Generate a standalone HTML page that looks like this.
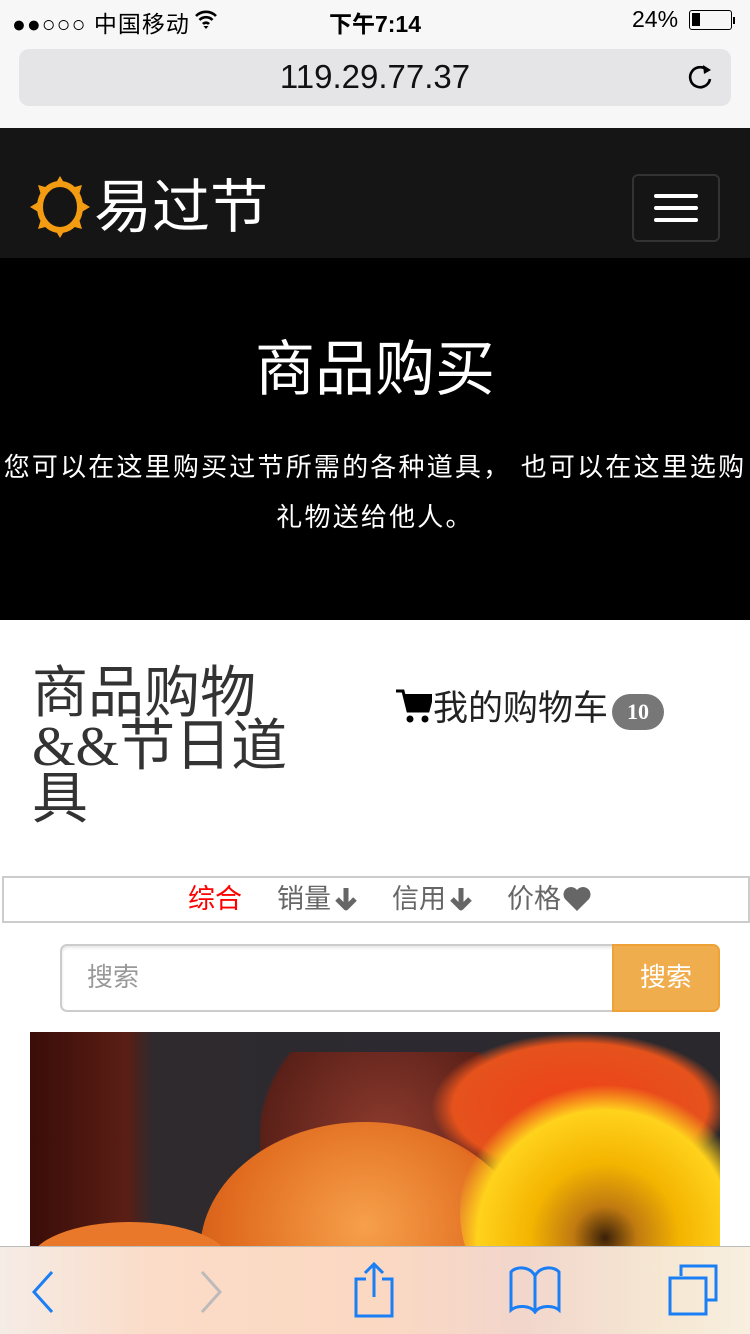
<!DOCTYPE html>
<html><head><meta charset="utf-8"><style>
*{margin:0;padding:0;box-sizing:border-box}
body{width:750px;height:1334px;overflow:hidden;position:relative;background:#fff;font-family:"Liberation Sans","Noto Sans CJK SC",sans-serif}
.abs{position:absolute}
</style></head><body>
<div class="abs" style="left:0;top:0;width:750px;height:128px;background:#f7f7f7"></div>
<div class="abs" style="left:12px;top:5px;font-size:23px;color:#000;letter-spacing:1px">●●○○○ 中国移动</div>
<svg class="abs" style="left:194px;top:9px" width="24" height="22" viewBox="0 0 24 22"><path d="M2 7a14 14 0 0 1 20 0M5.5 11a9 9 0 0 1 13 0M9 15a4 4 0 0 1 6 0" stroke="#000" stroke-width="2.6" fill="none"/><path d="M12 20l-2.5-3h5z" fill="#000"/></svg>
<div class="abs" style="left:0;width:750px;text-align:center;top:5px;font-size:23px;font-weight:bold">下午7:14</div>
<div class="abs" style="left:632px;top:6px;font-size:23px">24%</div>
<div class="abs" style="left:689px;top:10px;width:43px;height:20px;border:1.5px solid #000;border-radius:3px"><div style="margin:2px;width:8px;height:13px;background:#000"></div></div>
<div class="abs" style="left:733px;top:17px;width:2px;height:7px;background:#000"></div>
<div class="abs" style="left:19px;top:49px;width:712px;height:57px;background:#e5e5e8;border-radius:10px"></div>
<div class="abs" style="left:0;width:750px;text-align:center;top:58px;font-size:33px;color:#111">119.29.77.37</div>
<svg class="abs" style="left:686px;top:61px" width="30" height="32" viewBox="0 0 30 32"><path d="M22 10A10 10 0 1 0 24 18" stroke="#000" stroke-width="2.6" fill="none"/><path d="M17 4l8 5-7 4z" fill="#000"/></svg>

<div class="abs" style="left:0;top:128px;width:750px;height:130px;background:#151515"></div>
<svg class="abs" style="left:30px;top:176px" width="60" height="62" viewBox="0 0 60 62"><g fill="#f39c12"><polygon points="30,0 36,10 24,10"/><polygon points="30,62 36,52 24,52"/><polygon points="0,31 10,25 10,37"/><polygon points="60,31 50,25 50,37"/><polygon points="8,9 19,12 11,19"/><polygon points="52,9 41,12 49,19"/><polygon points="8,53 19,50 11,43"/><polygon points="52,53 41,50 49,43"/></g><ellipse cx="30" cy="31" rx="20" ry="23" fill="none" stroke="#f39c12" stroke-width="6"/></svg>
<div class="abs" style="left:94px;top:174px;font-size:58px;color:#fff;line-height:68px">易过节</div>
<div class="abs" style="left:632px;top:174px;width:88px;height:68px;border:2px solid #333;border-radius:6px"></div>
<div class="abs" style="left:654px;top:194px;width:44px;height:4px;background:#fff;border-radius:2px"></div>
<div class="abs" style="left:654px;top:206px;width:44px;height:4px;background:#fff;border-radius:2px"></div>
<div class="abs" style="left:654px;top:218px;width:44px;height:4px;background:#fff;border-radius:2px"></div>

<div class="abs" style="left:0;top:258px;width:750px;height:362px;background:#000"></div>
<div class="abs" style="left:0;width:750px;text-align:center;top:334px;font-size:60px;color:#fff;line-height:72px">商品购买</div>
<div class="abs" style="left:0;width:750px;text-align:center;top:442px;font-size:26px;letter-spacing:2.2px;color:#fff;line-height:50px;white-space:nowrap">您可以在这里购买过节所需的各种道具， 也可以在这里选购<br>礼物送给他人。</div>

<div class="abs" style="left:32px;top:668px;font-size:56px;color:#333;line-height:53px;width:280px;font-family:'Liberation Serif','Noto Sans CJK SC',serif">商品购物<br>&amp;&amp;节日道<br>具</div>
<svg class="abs" style="left:396px;top:688px" width="36" height="36" viewBox="0 0 36 36"><path d="M0 3h7l5 20h20l4-15H10" fill="none" stroke="#000" stroke-width="3"/><path d="M9 6h27l-4 17H12z" fill="#000"/><circle cx="14" cy="31" r="3.5" fill="#000"/><circle cx="29" cy="31" r="3.5" fill="#000"/></svg>
<div class="abs" style="left:433px;top:687px;font-size:35px;color:#222;line-height:44px">我的购物车</div>
<div class="abs" style="left:612px;top:694px;width:52px;height:36px;background:#777;border-radius:18px;color:#fff;font-size:22px;font-weight:bold;text-align:center;line-height:36px;font-family:'Liberation Serif',serif">10</div>

<div class="abs" style="left:2px;top:876px;width:748px;height:47px;border:2px solid #ccc"></div>
<div class="abs" style="left:188px;top:880px;font-size:27px;color:#f00;line-height:38px">综合</div>
<div class="abs" style="left:277px;top:880px;font-size:27px;color:#666;line-height:38px">销量</div>
<div class="abs" style="left:392px;top:880px;font-size:27px;color:#666;line-height:38px">信用</div>
<div class="abs" style="left:507px;top:880px;font-size:27px;color:#666;line-height:38px">价格</div>
<svg class="abs" style="left:333px;top:886px" width="26" height="26" viewBox="0 0 26 26"><path d="M13 2v20M4 13l9 9 9-9" stroke="#666" stroke-width="5" fill="none" stroke-linejoin="round"/></svg>
<svg class="abs" style="left:448px;top:886px" width="26" height="26" viewBox="0 0 26 26"><path d="M13 2v20M4 13l9 9 9-9" stroke="#666" stroke-width="5" fill="none" stroke-linejoin="round"/></svg>
<svg class="abs" style="left:562px;top:886px" width="30" height="26" viewBox="0 0 30 26"><path d="M15 25L3 13A7 7 0 0 1 15 4A7 7 0 0 1 27 13z" fill="#666"/></svg>

<div class="abs" style="left:60px;top:944px;width:556px;height:68px;border:2px solid #ccc;border-right:none;border-radius:7px 0 0 7px;box-shadow:inset 0 2px 3px rgba(0,0,0,.1)"></div>
<div class="abs" style="left:87px;top:958px;font-size:26px;color:#999;line-height:38px">搜索</div>
<div class="abs" style="left:612px;top:944px;width:108px;height:68px;background:#f0ad4e;border:2px solid #eea236;border-radius:0 7px 7px 0;color:#fff;font-size:26px;text-align:center;line-height:62px">搜索</div>

<div class="abs" style="left:30px;top:1032px;width:690px;height:220px;overflow:hidden;background:linear-gradient(90deg,#3a0d08 0%,#5a1e14 14%,#2e2a2e 18%,#2c2a30 60%,#2a282c 100%)">
<div class="abs" style="left:230px;top:20px;width:250px;height:220px;background:radial-gradient(ellipse at 50% 40%,#8e3b2e,#5a2018 70%,transparent 72%)"></div>
<div class="abs" style="left:170px;top:90px;width:330px;height:260px;border-radius:50%;background:radial-gradient(ellipse at 50% 40%,#f6a04a,#e06a1e 60%,#b94a12)"></div>
<div class="abs" style="left:0;top:190px;width:200px;height:80px;border-radius:50%;background:#e9782a"></div>
<div class="abs" style="left:400px;top:0;width:300px;height:150px;border-radius:50%;background:radial-gradient(ellipse,#f0401a,#e5521c 60%,transparent 70%)"></div>
<div class="abs" style="left:430px;top:50px;width:290px;height:260px;border-radius:50%;background:radial-gradient(circle at 50% 60%,#3a2008 0%,#c07a10 15%,#f4b400 35%,#ffd21c 60%,transparent 72%)"></div>
</div>

<div class="abs" style="left:0;top:1246px;width:750px;height:88px;background:linear-gradient(90deg,#f5ece6 0%,#fbdcc8 20%,#fbd8c2 50%,#f2d6cc 70%,#f6e9d4 90%,#f8efe0 100%);border-top:1px solid #bbb"></div>
<svg class="abs" style="left:30px;top:1270px" width="26" height="44" viewBox="0 0 26 44"><path d="M22 2L4 22l18 20" stroke="#1a7ff5" stroke-width="3" fill="none"/></svg>
<svg class="abs" style="left:198px;top:1270px" width="26" height="44" viewBox="0 0 26 44"><path d="M4 2l18 20L4 42" stroke="#bbb" stroke-width="3" fill="none"/></svg>
<svg class="abs" style="left:352px;top:1262px" width="44" height="56" viewBox="0 0 44 56"><path d="M14 17H4v37h36V17H30M22 35V3M13 11l9-9 9 9" stroke="#1a7ff5" stroke-width="3" fill="none"/></svg>
<svg class="abs" style="left:508px;top:1264px" width="54" height="50" viewBox="0 0 54 50"><path d="M27 12C22 2 8 2 3 8v38c6-5 19-5 24 2 5-7 18-7 24-2V8c-5-6-19-6-24 4v36" stroke="#1a7ff5" stroke-width="3" fill="none"/></svg>
<svg class="abs" style="left:666px;top:1264px" width="54" height="52" viewBox="0 0 54 52"><path d="M15 12V2h35v34h-9" stroke="#1a7ff5" stroke-width="3" fill="none"/><rect x="4" y="14" width="36" height="36" stroke="#1a7ff5" stroke-width="3" fill="none"/></svg>
</body></html>
